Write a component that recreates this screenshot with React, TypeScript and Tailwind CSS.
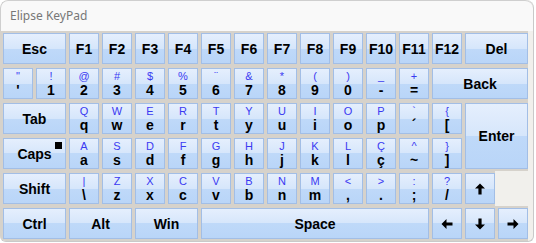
import React from 'react';

type KeyDef = {
  main: string;
  top?: string;
  span?: 1 | 2 | 3 | 7;
  tall?: boolean;
  arrow?: 'up' | 'down' | 'left' | 'right';
  empty?: boolean;
  caps?: boolean;
};

const spanClass: Record<number, string> = {
  1: 'col-span-1',
  2: 'col-span-2',
  3: 'col-span-3',
  7: 'col-span-7',
};

const dual = (pairs: string) =>
  pairs.split(' ').map((p) => ({ top: p[0], main: p[1] } as KeyDef));

const keys: KeyDef[] = [
  { main: 'Esc', span: 2 },
  ...['F1', 'F2', 'F3', 'F4', 'F5', 'F6', 'F7', 'F8', 'F9', 'F10', 'F11', 'F12'].map((f) => ({ main: f })),
  { main: 'Del', span: 2 },

  ...dual(`"' !1 @2 #3 $4 %5 ¨6 &7 *8 (9 )0 _- +=`),
  { main: 'Back', span: 3 },

  { main: 'Tab', span: 2 },
  ...dual('Qq Ww Ee Rr Tt Yy Uu Ii Oo Pp `´ {['),
  { main: 'Enter', span: 2, tall: true },

  { main: 'Caps', span: 2, caps: true },
  ...dual('Aa Ss Dd Ff Gg Hh Jj Kk Ll Çç ^~ }]'),

  { main: 'Shift', span: 2 },
  ...dual('|\\ Zz Xx Cc Vv Bb Nn Mm <, >. :; ?/'),
  { main: '', arrow: 'up' },
  { main: '', empty: true },

  { main: 'Ctrl', span: 2 },
  { main: 'Alt', span: 2 },
  { main: 'Win', span: 2 },
  { main: 'Space', span: 7 },
  { main: '', arrow: 'left' },
  { main: '', arrow: 'down' },
  { main: '', arrow: 'right' },
];

function Arrow({ dir }: { dir: 'up' | 'down' | 'left' | 'right' }) {
  const rot = { up: 0, right: 90, down: 180, left: 270 }[dir];
  return (
    <svg width="12" height="12" viewBox="0 0 12 12">
      <g transform={`rotate(${rot} 6 6)`}>
        <path d="M6 0.5 L11 5.5 L7.6 5.5 L7.6 11.5 L4.4 11.5 L4.4 5.5 L1 5.5 Z" fill="#000" />
      </g>
    </svg>
  );
}

function Key({ k }: { k: KeyDef }) {
  const span = spanClass[k.span ?? 1];
  if (k.empty) return <div className={span} />;
  return (
    <div className={`${span} ${k.tall ? 'row-span-2' : ''} bg-[#d6d2cb] pl-[3px] py-[2px]`}>
      <div className="relative flex h-full w-full flex-col items-center justify-center border border-[#a2bee6] bg-[linear-gradient(to_bottom,#e5effd,#d6e6fb_50%,#bfd9f9_50%,#b9d5f8)] text-black">
        {k.arrow ? (
          <Arrow dir={k.arrow} />
        ) : k.top ? (
          <>
            <div className="h-[12px] text-[11px] leading-[12px] text-[#3a3af2]">{k.top}</div>
            <div className="h-[16px] text-[14px] font-bold leading-[16px]">{k.main}</div>
          </>
        ) : (
          <div className="text-[14px] font-bold leading-[16px]">{k.main}</div>
        )}
        {k.caps && <div className="absolute right-[3px] top-[3px] h-[7px] w-[7px] bg-black" />}
      </div>
    </div>
  );
}

export default function App() {
  return (
    <div className="h-[243px] w-[536px] bg-white">
      <div className="flex h-[242px] w-[534px] flex-col overflow-hidden rounded-t-[8px] rounded-b-[6px] border-r border-b border-[#c9c9c9] bg-[#f1f0ec] font-['Liberation_Sans',Arial,sans-serif]">
        <div className="flex h-[31px] shrink-0 items-center rounded-t-[8px] border-l border-t border-[#cfcfcf] bg-[#f9f9f9] pl-[9px] font-['Noto_Sans',sans-serif] text-[12px] text-[#777777]">
          Elipse KeyPad
        </div>
        <div className="grid grid-cols-[repeat(16,33px)] grid-rows-[repeat(6,35px)]">
          {keys.map((k, i) => (
            <Key key={i} k={k} />
          ))}
        </div>
      </div>
    </div>
  );
}
